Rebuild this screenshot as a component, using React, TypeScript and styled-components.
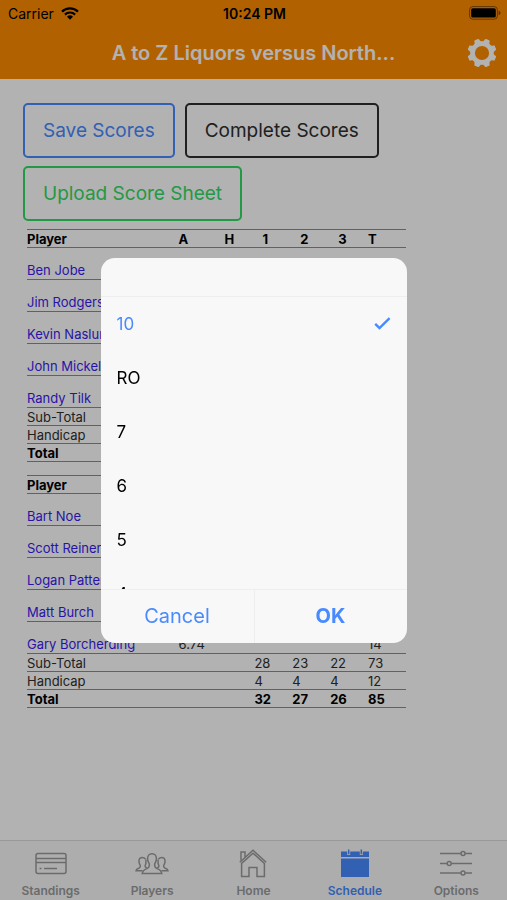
import React, { useState } from 'react';
import styled, { createGlobalStyle } from 'styled-components';

const colors = {
  header: '#ff8c00',
  primary: '#488aff',
  secondary: '#32db64',
  dark: '#2e2e2e',
  link: '#3a1cf0',
  muted: '#9a9a9a',
  rule: '#8c8c8c',
  panel: '#f8f8f8',
  hairline: '#eeeeee',
};

const GlobalStyle = createGlobalStyle`
  *, *::before, *::after { box-sizing: border-box; }
  body {
    margin: 0;
    background: #ffffff;
    color: #000000;
    font-family: Inter, Roboto, sans-serif;
    font-size: 13px;
  }
  button { font-family: inherit; cursor: pointer; }
`;

const Page = styled.div`
  display: flex;
  flex-direction: column;
  min-height: 100vh;
`;

const Header = styled.header`
  background: ${colors.header};
`;

const StatusBar = styled.div`
  display: grid;
  grid-template-columns: 1fr auto 1fr;
  align-items: center;
  height: 26px;
  padding: 0 6px 0 8px;
  font-size: 14px;
`;

const Carrier = styled.span`
  display: flex;
  align-items: center;
  gap: 7px;
`;

const Clock = styled.time`
  font-size: 14px;
  font-weight: 600;
`;

const BatterySlot = styled.span`
  display: flex;
  justify-content: flex-end;
`;

const Toolbar = styled.div`
  display: grid;
  grid-template-columns: 40px 1fr 40px;
  align-items: center;
  height: 53px;
  padding: 0 5px;
`;

const Title = styled.h1`
  grid-column: 2;
  margin: 0;
  color: #ffffff;
  font-size: 20px;
  font-weight: 600;
  line-height: 24px;
  text-align: center;
  white-space: nowrap;
`;

const IconButton = styled.button`
  display: flex;
  align-items: center;
  justify-content: center;
  height: 40px;
  padding: 0;
  border: 0;
  background: none;
  color: #ffffff;
`;

const Content = styled.main`
  flex: 1;
  padding: 24px 23px;
`;

const Actions = styled.div`
  display: flex;
  flex-wrap: wrap;
  gap: 8px 10px;
`;

const ActionButton = styled.button<{ $color: string }>`
  height: 55px;
  padding: 0 18px;
  border: 2px solid ${(p) => p.$color};
  border-radius: 5px;
  background: none;
  color: ${(p) => p.$color};
  font-size: 19px;
`;

const ScoreTable = styled.table`
  width: 379px;
  max-width: 100%;
  margin: 8px 4px 13px;
  border-collapse: collapse;
  table-layout: fixed;
  color: ${colors.dark};

  & + & {
    margin-top: 13px;
  }
`;

const HeadRow = styled.tr`
  height: 18px;
  border-top: 1px solid ${colors.rule};
  border-bottom: 1px solid ${colors.rule};
`;

const PlayerRow = styled.tr`
  height: 32px;
  border-bottom: 1px solid ${colors.rule};
`;

const SummaryRow = styled.tr<{ $strong?: boolean }>`
  height: 18px;
  border-bottom: 1px solid ${colors.rule};
  color: ${(p) => (p.$strong ? '#000000' : colors.dark)};
  font-weight: ${(p) => (p.$strong ? 700 : 400)};
`;

const HeadCell = styled.th<{ $inset?: boolean }>`
  padding: 0 0 0 ${(p) => (p.$inset ? '8px' : '0')};
  color: #000000;
  font-weight: 700;
  line-height: 16px;
  text-align: left;
`;

const LabelCell = styled.th`
  padding: 0;
  font-weight: inherit;
  line-height: 16px;
  text-align: left;
  white-space: nowrap;
`;

const Cell = styled.td`
  padding: 0;
  line-height: 16px;
`;

const PlayerName = styled(LabelCell)`
  padding-top: 12px;
  font-weight: 400;
`;

const PlayerCell = styled(Cell)`
  padding-top: 12px;
`;

const PlayerLink = styled.a`
  color: ${colors.link};
  text-decoration: none;
`;

const TabBar = styled.nav`
  display: grid;
  grid-template-columns: repeat(5, 1fr);
  height: 60px;
  border-top: 1px solid #dcdcdc;
  background: ${colors.panel};
`;

const Tab = styled.a<{ $active?: boolean }>`
  display: flex;
  flex-direction: column;
  align-items: center;
  gap: 2px;
  padding-top: 6px;
  color: ${(p) => (p.$active ? colors.primary : colors.muted)};
  font-size: 12px;
  font-weight: 600;
  line-height: 16px;
  text-decoration: none;
`;

const Backdrop = styled.div`
  position: fixed;
  inset: 0;
  display: flex;
  align-items: center;
  justify-content: center;
  background: rgba(0, 0, 0, 0.3);
`;

const Dialog = styled.form`
  display: flex;
  flex-direction: column;
  width: 306px;
  max-width: 90%;
  overflow: hidden;
  border-radius: 14px;
  background: ${colors.panel};
`;

const DialogHead = styled.div`
  height: 39px;
  border-bottom: 1px solid ${colors.hairline};
`;

const OptionList = styled.div`
  height: 292px;
  overflow-y: auto;
  scrollbar-width: none;
`;

const Option = styled.label<{ $checked: boolean }>`
  display: flex;
  align-items: center;
  justify-content: space-between;
  height: 54px;
  padding: 0 16px;
  color: ${(p) => (p.$checked ? colors.primary : '#000000')};
  font-size: 17px;
  cursor: pointer;
`;

const HiddenRadio = styled.input`
  position: absolute;
  opacity: 0;
  pointer-events: none;
`;

const DialogButtons = styled.div`
  display: grid;
  grid-template-columns: 1fr 1fr;
  border-top: 1px solid ${colors.hairline};
`;

const DialogButton = styled.button<{ $strong?: boolean }>`
  height: 53px;
  padding: 0;
  border: 0;
  border-left: ${(p) => (p.$strong ? `1px solid ${colors.hairline}` : '0')};
  background: none;
  color: ${colors.primary};
  font-size: 20px;
  font-weight: ${(p) => (p.$strong ? 700 : 400)};
`;

const WifiIcon = () => (
  <svg width="18" height="13" viewBox="0 0 18 13" fill="none" stroke="#000" strokeWidth="2.2" aria-hidden="true">
    <path d="M1 4.6a11.4 11.4 0 0 1 16 0" />
    <path d="M3.9 7.6a7.2 7.2 0 0 1 10.2 0" />
    <path d="M9 12.8 6 9.7a4.3 4.3 0 0 1 6 0z" fill="#000" stroke="none" />
  </svg>
);

const BatteryIcon = () => (
  <svg width="32" height="14" viewBox="0 0 32 14" aria-hidden="true">
    <rect x="0.6" y="0.6" width="27.8" height="12.6" rx="3.2" fill="none" stroke="#000" strokeOpacity="0.45" />
    <rect x="2.2" y="2.2" width="24.6" height="9.4" rx="1.6" />
    <path d="M29.6 4.8c1.3.4 1.9 1.2 1.9 2.2s-.6 1.8-1.9 2.2z" fillOpacity="0.5" />
  </svg>
);

const GearIcon = () => (
  <svg width="30" height="30" viewBox="-15 -15 30 30" fill="currentColor" aria-hidden="true">
    <circle r="9.4" fill="none" stroke="currentColor" strokeWidth="4.6" />
    {[0, 1, 2, 3, 4, 5, 6, 7].map((n) => (
      <path
        key={n}
        transform={`rotate(${22.5 + n * 45})`}
        d="M-4.6 -9.8 Q-2.8 -11.2 -2.6 -13.6 Q-2.5 -14.4 -1.7 -14.5 L1.7 -14.5 Q2.5 -14.4 2.6 -13.6 Q2.8 -11.2 4.6 -9.8z"
      />
    ))}
  </svg>
);

const CheckIcon = () => (
  <svg width="17" height="13" viewBox="0 0 17 13" fill="none" stroke="currentColor" strokeWidth="2.4" aria-hidden="true">
    <path d="M1.2 6.8 5.5 11 15.6 1.2" />
  </svg>
);

const TabIcon = ({ children }: { children: React.ReactNode }) => (
  <svg width="34" height="34" viewBox="0 0 34 34" fill="none" stroke="currentColor" strokeWidth="1.5" aria-hidden="true">
    {children}
  </svg>
);

const StandingsIcon = () => (
  <TabIcon>
    <rect x="2" y="6.500" width="30" height="20" rx="2" />
    <path d="M2 11.5h30M2 15.500h30M5.5 21.500h2M10 21.500h13" />
  </TabIcon>
);

const PlayersIcon = () => (
  <TabIcon>
    <path d="M17 6.7c-3 0-4.6 2.1-4.4 5.2.1 1.700.4 2.600 1 3.600.5.800.8 1.200.8 2.300 0 2.200-.5 3-2.600 3.800-2.500.9-4.100 1.500-4.600 4.900h19.600c-.5-3.400-2.100-4-4.600-4.900-2.100-.8-2.600-1.600-2.600-3.800 0-1.100.3-1.500.8-2.300.6-1 .9-1.900 1-3.600.2-3.100-1.400-5.200-4.400-5.200z" />
    <path d="M10.8 12.5c-.7-1.400-1.800-2.100-3.300-2.100-2.400 0-3.700 1.700-3.500 4.200.1 1.800.5 2.400.9 3.100.9 1.500.4 2.900-1.200 3.500-1.500.5-2.500 1-2.700 2.600h6.500" />
    <path d="M23.2 12.5c.7-1.400 1.800-2.100 3.300-2.100 2.400 0 3.700 1.700 3.500 4.200-.1 1.800-.5 2.400-.9 3.100-.9 1.500-.4 2.900 1.200 3.500 1.500.5 2.500 1 2.700 2.600h-6.500" />
    <path d="M10.9 12.8c.1 2.400.4 4.200-.6 5.400-.7 1 0 2.200 1.500 2.700M23.100 12.800c-.1 2.400-.4 4.200.6 5.400.7 1 0 2.200-1.500 2.700" />
  </TabIcon>
);

const HomeIcon = () => (
  <TabIcon>
    <path d="M3.8 15.2 17 3.3l13.2 11.900" />
    <path d="M5.6 16.4V29.500H13V20.5h8v9h7.400V16.400L17 6.200z" />
    <path d="M5 13.600V5h4v5.200" />
  </TabIcon>
);

const ScheduleIcon = () => (
  <TabIcon>
    <path d="M3 4.5h28v5.4H3zM3 11.5h28V30H3z" fill="currentColor" stroke="none" />
    <path d="M10.7 3v5M23.3 3v5" stroke={colors.panel} strokeWidth="3" />
    <path d="M10.7 2.6v4.6M23.3 2.6v4.6" />
  </TabIcon>
);

const OptionsIcon = () => (
  <TabIcon>
    <path d="M1 6.5h20.8M26.2 6.500H33M1 16.500h7M12.400 16.500H33M1 26h20.800M26.200 26H33" />
    <circle cx="24" cy="6.500" r="2" />
    <circle cx="10.2" cy="16.500" r="2" />
    <circle cx="24" cy="26" r="2" />
  </TabIcon>
);

interface Player {
  name: string;
  average?: string;
  total?: string;
}

interface Summary {
  label: string;
  values?: string[];
  strong?: boolean;
}

const homePlayers: Player[] = [
  { name: 'Ben Jobe' },
  { name: 'Jim Rodgers' },
  { name: 'Kevin Naslund' },
  { name: 'John Mickels' },
  { name: 'Randy Tilk' },
];

const awayPlayers: Player[] = [
  { name: 'Bart Noe' },
  { name: 'Scott Reiner' },
  { name: 'Logan Patten' },
  { name: 'Matt Burch' },
  { name: 'Gary Borcherding', average: '6.74', total: '14' },
];

const homeSummary: Summary[] = [{ label: 'Sub-Total' }, { label: 'Handicap' }, { label: 'Total', strong: true }];

const awaySummary: Summary[] = [
  { label: 'Sub-Total', values: ['28', '23', '22', '73'] },
  { label: 'Handicap', values: ['4', '4', '4', '12'] },
  { label: 'Total', values: ['32', '27', '26', '85'], strong: true },
];

const TeamScores = ({ players, summary }: { players: Player[]; summary: Summary[] }) => (
  <ScoreTable>
    <colgroup>
      <col width="40%" />
      <col width="10%" />
      <col width="10%" />
      <col width="10%" />
      <col width="10%" />
      <col width="10%" />
      <col width="10%" />
    </colgroup>
    <thead>
      <HeadRow>
        <HeadCell scope="col">Player</HeadCell>
        <HeadCell scope="col">A</HeadCell>
        {['H', '1', '2', '3'].map((h) => (
          <HeadCell key={h} scope="col" $inset>
            {h}
          </HeadCell>
        ))}
        <HeadCell scope="col">T</HeadCell>
      </HeadRow>
    </thead>
    <tbody>
      {players.map((p) => (
        <PlayerRow key={p.name}>
          <PlayerName scope="row">
            <PlayerLink href="#player">{p.name}</PlayerLink>
          </PlayerName>
          <PlayerCell>{p.average}</PlayerCell>
          <PlayerCell colSpan={4} />
          <PlayerCell>{p.total}</PlayerCell>
        </PlayerRow>
      ))}
      {summary.map((s) => (
        <SummaryRow key={s.label} $strong={s.strong}>
          <LabelCell scope="row">{s.label}</LabelCell>
          <Cell colSpan={2} />
          {[0, 1, 2, 3].map((i) => (
            <Cell key={i}>{s.values?.[i]}</Cell>
          ))}
        </SummaryRow>
      ))}
    </tbody>
  </ScoreTable>
);

const tabs = [
  { label: 'Standings', Icon: StandingsIcon },
  { label: 'Players', Icon: PlayersIcon },
  { label: 'Home', Icon: HomeIcon },
  { label: 'Schedule', Icon: ScheduleIcon },
  { label: 'Options', Icon: OptionsIcon },
];

const scoreOptions = ['10', 'RO', '7', '6', '5', '4'];

export default function App() {
  const [score, setScore] = useState('10');
  const [open, setOpen] = useState(true);

  return (
    <>
      <GlobalStyle />
      <Page>
        <Header>
          <StatusBar>
            <Carrier>
              Carrier
              <WifiIcon />
            </Carrier>
            <Clock>10:24 PM</Clock>
            <BatterySlot>
              <BatteryIcon />
            </BatterySlot>
          </StatusBar>
          <Toolbar>
            <Title>A to Z Liquors versus North...</Title>
            <IconButton type="button" aria-label="Settings">
              <GearIcon />
            </IconButton>
          </Toolbar>
        </Header>
        <Content>
          <Actions>
            <ActionButton type="button" $color={colors.primary}>
              Save Scores
            </ActionButton>
            <ActionButton type="button" $color={colors.dark}>
              Complete Scores
            </ActionButton>
            <ActionButton type="button" $color={colors.secondary}>
              Upload Score Sheet
            </ActionButton>
          </Actions>
          <TeamScores players={homePlayers} summary={homeSummary} />
          <TeamScores players={awayPlayers} summary={awaySummary} />
        </Content>
        <TabBar>
          {tabs.map(({ label, Icon }) => (
            <Tab key={label} href={`#${label.toLowerCase()}`} $active={label === 'Schedule'}>
              <Icon />
              {label}
            </Tab>
          ))}
        </TabBar>
      </Page>
      {open && (
        <Backdrop>
          <Dialog role="dialog" aria-label="Score" onSubmit={(e) => e.preventDefault()}>
            <DialogHead />
            <OptionList role="radiogroup">
              {scoreOptions.map((o) => (
                <Option key={o} $checked={o === score}>
                  <HiddenRadio type="radio" name="score" checked={o === score} onChange={() => setScore(o)} />
                  {o}
                  {o === score && <CheckIcon />}
                </Option>
              ))}
            </OptionList>
            <DialogButtons>
              <DialogButton type="button" onClick={() => setOpen(false)}>
                Cancel
              </DialogButton>
              <DialogButton type="button" $strong onClick={() => setOpen(false)}>
                OK
              </DialogButton>
            </DialogButtons>
          </Dialog>
        </Backdrop>
      )}
    </>
  );
}
